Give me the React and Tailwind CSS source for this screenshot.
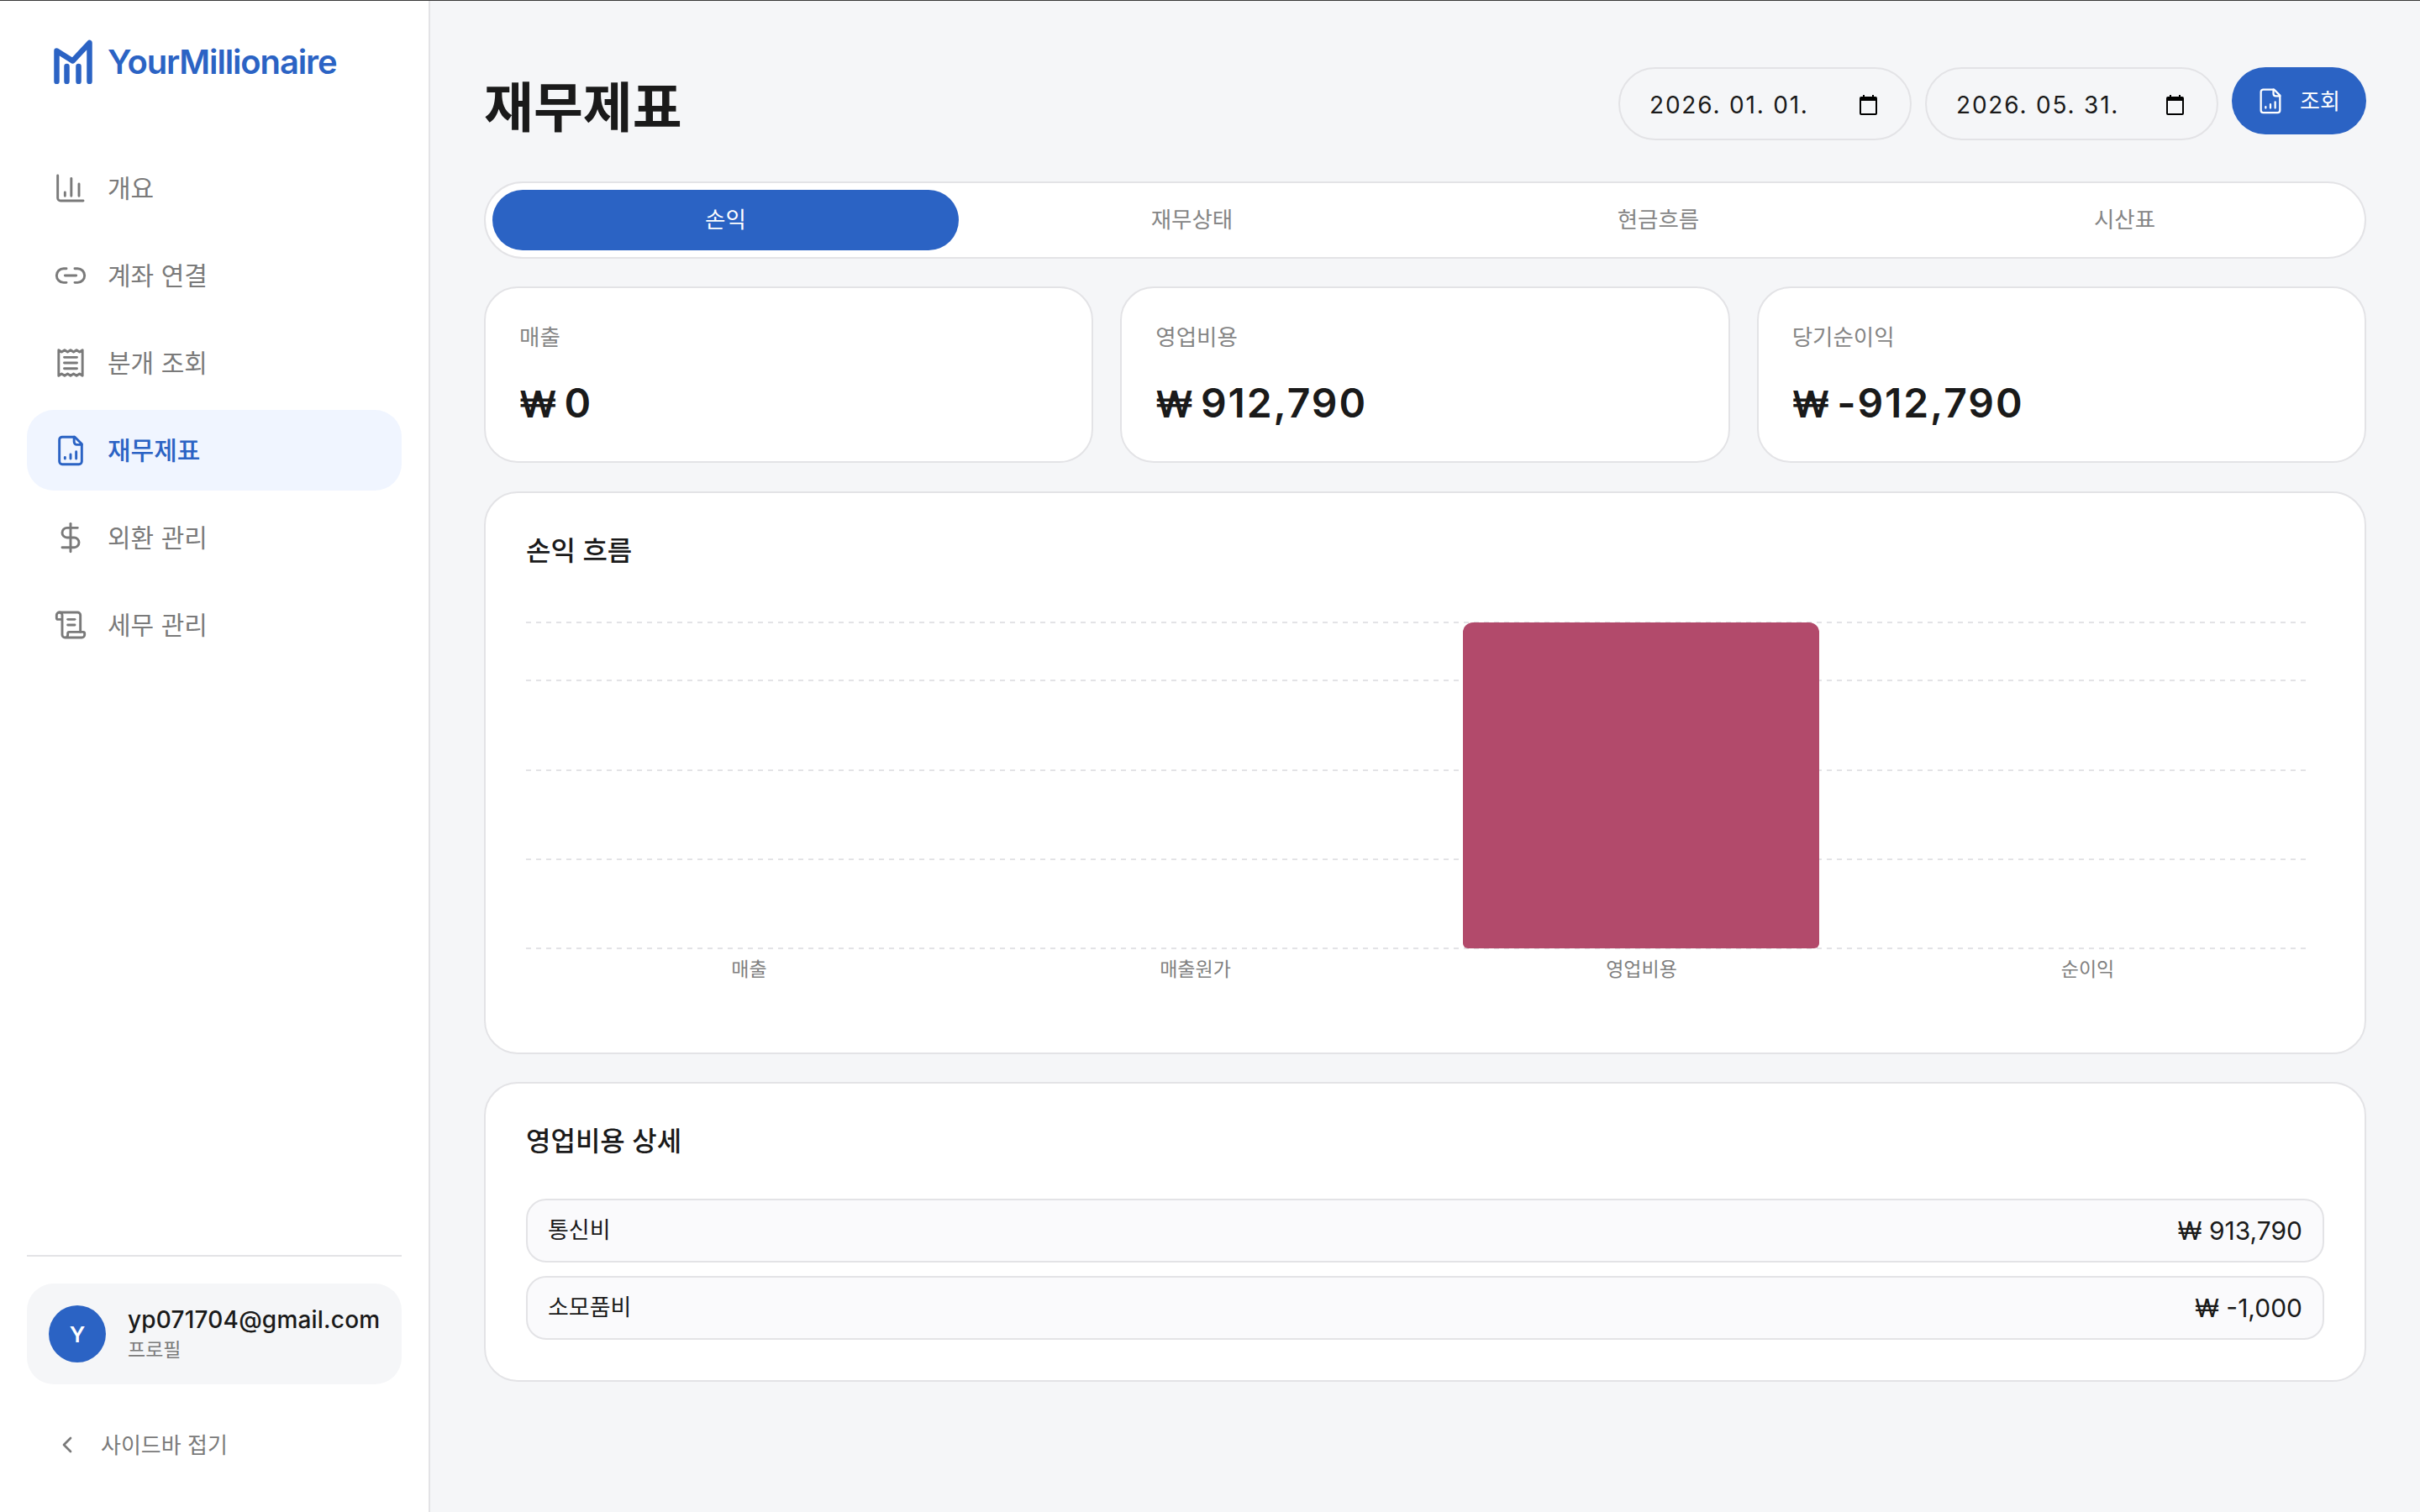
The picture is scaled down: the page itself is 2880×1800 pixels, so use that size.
import React from "react";
import { Link2, DollarSign, ScrollText, ChevronLeft } from "lucide-react";

const Svg = ({ className, sw = 1.75, children }) => (
  <svg viewBox="0 0 24 24" fill="none" stroke="currentColor" strokeWidth={sw} strokeLinecap="round" strokeLinejoin="round" className={className}>
    {children}
  </svg>
);

const ChartIcon = ({ className }) => (
  <Svg className={className}>
    <path d="M2.800 3v16a2 2 0 0 0 2 2H21" />
    <path d="M8 17.500v-2.500M12.500 17.500V5M18 17.500V9" />
  </Svg>
);
const ReceiptIcon = ({ className }) => (
  <Svg className={className}>
    <path d="M3.500 2.800l2.125 1.400 2.125-1.400 2.125 1.400 2.125-1.400 2.125 1.400 2.125-1.400 2.125 1.400 2.125-1.400v18.400l-2.125-1.400-2.125 1.400-2.125-1.400-2.125 1.400-2.125-1.400-2.125 1.400-2.125-1.400-2.125 1.400Z" />
    <path d="M7.500 8h9M7.500 12h9M7.500 16h9" />
  </Svg>
);
const FileChartIcon = ({ className, sw }) => (
  <Svg className={className} sw={sw}>
    <path d="M15 2.500H6a2 2 0 0 0-2 2v15.500a2 2 0 0 0 2 2h12a2 2 0 0 0 2-2V7.500Z" />
    <path d="M14.500 2.500v3.500a2 2 0 0 0 2 2H20" />
    <path d="M8 18v-1M12 18v-3M16 18v-5" />
  </Svg>
);
const Logo = () => (
  <svg viewBox="0 0 46 54" className="h-[54px] w-[46px] shrink-0 text-[#2b63c4]" fill="none" stroke="currentColor" strokeWidth="6.500" strokeLinecap="round" strokeLinejoin="round">
    <path d="M3.500 51V14.500L22.500 26.500L42.500 5V51" />
    <path d="M15.500 33V51M29.500 33V51" />
  </svg>
);
const CalIcon = () => (
  <svg viewBox="0 0 21 24" className="h-6 w-[21px] shrink-0 text-black" fill="currentColor">
    <path fillRule="evenodd" d="M4 0h2v2h9V0h2v2h2a2 2 0 0 1 2 2v18a2 2 0 0 1-2 2H2a2 2 0 0 1-2-2V4a2 2 0 0 1 2-2h2ZM2 7v15h17V7Z" />
  </svg>
);

const nav = [
  { label: "개요", icon: ChartIcon },
  { label: "계좌 연결", icon: Link2 },
  { label: "분개 조회", icon: ReceiptIcon },
  { label: "재무제표", icon: FileChartIcon, active: true },
  { label: "외환 관리", icon: DollarSign },
  { label: "세무 관리", icon: ScrollText },
];
const tabs = ["손익", "재무상태", "현금흐름", "시산표"];
const stats = [
  { label: "매출", value: "0" },
  { label: "영업비용", value: "912,790" },
  { label: "당기순이익", value: "-912,790" },
];
const xLabels = ["매출", "매출원가", "영업비용", "순이익"];
const gridY = [10, 79, 186, 292, 398];
const rows = [
  { label: "통신비", value: "₩ 913,790" },
  { label: "소모품비", value: "₩ -1,000" },
];

function DateBox({ value }) {
  return (
    <div className="flex h-[87px] w-[349px] items-center justify-between rounded-full border-2 border-[#e3e3e6] pl-[35px] pr-[39px] pt-[2px] text-[28px] tracking-[1.800px] text-[#1a1a1a]">
      <span>{value}</span>
      <CalIcon />
    </div>
  );
}

export default function App() {
  return (
    <div className="relative flex h-[1800px] w-[2880px] overflow-hidden bg-[#f5f6f8] font-['Inter','Noto_Sans_CJK_KR',sans-serif] text-[#1a1a1a]">
      <div className="absolute left-0 right-0 top-0 h-px bg-[#3a3a3a]" />

      <aside className="flex w-[512px] shrink-0 flex-col border-r-2 border-[#e3e3e6] bg-white px-8 pb-12">
        <div className="flex h-[176px] items-start gap-[18px] pl-8 pt-[46px]">
          <Logo />
          <span className="text-[40px] font-semibold leading-[56px] tracking-[-1.150px] text-[#2b63c4]">YourMillionaire</span>
        </div>
        <nav className="flex flex-col gap-2">
          {nav.map(({ label, icon: Icon, active }) => (
            <div key={label} className={active ? "flex h-[96px] items-center gap-6 rounded-[32px] bg-[#f0f5ff] pl-8 text-[30px] font-medium text-[#2b63c4]" : "flex h-[96px] items-center gap-6 rounded-[32px] pl-8 text-[30px] text-[#7a7a7a]"}>
              <Icon className="h-10 w-10 shrink-0" strokeWidth={1.75} />
              <span>{label}</span>
            </div>
          ))}
        </nav>
        <div className="mt-auto border-t-2 border-[#e3e3e6] pt-8">
          <div className="flex h-[120px] items-center gap-[26px] rounded-[32px] bg-[#f5f6f8] pl-[26px]">
            <div className="flex h-[68px] w-[68px] shrink-0 items-center justify-center rounded-full bg-[#2b63c4] text-[26px] font-semibold text-white">Y</div>
            <div className="min-w-0">
              <div className="whitespace-nowrap text-[28px] font-medium leading-9 tracking-[0.200px] text-[#1a1a1a]">yp071704@gmail.com</div>
              <div className="mt-[2px] text-[23px] leading-8 text-[#7a7a7a]">프로필</div>
            </div>
          </div>
          <div className="mt-10 flex h-16 items-center gap-6 pl-8 text-[26px] text-[#7a7a7a]">
            <ChevronLeft className="h-8 w-8 shrink-0" strokeWidth={2} />
            <span>사이드바 접기</span>
          </div>
        </div>
      </aside>

      <main className="min-w-0 flex-1 pl-16 pr-16 pt-20">
        <header className="flex h-[136px] items-start justify-between">
          <h1 className="text-[64px] font-semibold leading-[96px] text-[#1a1a1a]">재무제표</h1>
          <div className="flex items-start gap-4">
            <DateBox value="2026. 01. 01." />
            <DateBox value="2026. 05. 31." />
            <button className="flex h-20 w-40 items-center justify-center gap-[18px] rounded-full bg-[#2b63c4] pr-[2px] text-[26px] text-white">
              <FileChartIcon className="h-[34px] w-[34px] shrink-0" sw={1.6} />
              <span>조회</span>
            </button>
          </div>
        </header>

        <div className="grid h-[92px] grid-cols-4 rounded-full border-2 border-[#e3e3e6] bg-white p-2">
          {tabs.map((t, i) => (
            <div key={t} className={i === 0 ? "flex items-center justify-center rounded-full bg-[#2b63c4] text-[26.500px] text-white" : "flex items-center justify-center rounded-full text-[26.500px] text-[#858585]"}>
              {t}
            </div>
          ))}
        </div>

        <div className="mt-[33px] grid h-[210px] grid-cols-3 gap-8">
          {stats.map((s) => (
            <div key={s.label} className="rounded-[40px] border-2 border-[#e3e3e6] bg-white px-10 pt-10">
              <div className="text-[26.500px] leading-[36px] text-[#858585]">{s.label}</div>
              <div className="mt-[31px] text-[48px] font-semibold leading-[60px] tracking-[1.900px] text-[#1a1a1a]">
                <span className="text-[44px] tracking-[-4px]">₩ </span>
                <span className="ml-[6px]">{s.value}</span>
              </div>
            </div>
          ))}
        </div>

        <section className="mt-[34px] h-[670px] rounded-[40px] border-2 border-[#e3e3e6] bg-white px-12 pt-12">
          <h2 className="text-[32px] font-medium leading-[42px] text-[#1a1a1a]">손익 흐름</h2>
          <svg viewBox="0 0 2124 400" className="mt-[54px] block h-[400px] w-[2124px]">
            {gridY.map((y) => (
              <line key={y} x1="0" x2="2119" y1={y} y2={y} stroke="#e3e3e6" strokeWidth="2" strokeDasharray="6 6" />
            ))}
            <path d="M1115 22a12 12 0 0 1 12-12h400a12 12 0 0 1 12 12v370a6 6 0 0 1-6 6h-412a6 6 0 0 1-6-6Z" fill="#b24a6b" />
          </svg>
          <div className="mt-2 grid w-[2124px] grid-cols-4">
            {xLabels.map((l) => (
              <div key={l} className="text-center text-[23px] leading-[30px] text-[#808080]">{l}</div>
            ))}
          </div>
        </section>

        <section className="mt-[33px] rounded-[40px] border-2 border-[#e3e3e6] bg-white px-12 pb-12 pt-12">
          <h2 className="text-[32px] font-medium leading-[42px] text-[#1a1a1a]">영업비용 상세</h2>
          <div className="mt-[47px] flex flex-col gap-4">
            {rows.map((r) => (
              <div key={r.label} className="flex h-[76px] items-center justify-between rounded-3xl border-2 border-[#e3e3e6] bg-[#fafafc] pl-6 pr-6 text-[27px] text-[#1a1a1a]">
                <span>{r.label}</span>
                <span className="text-[30px]">{r.value}</span>
              </div>
            ))}
          </div>
        </section>
      </main>
    </div>
  );
}
